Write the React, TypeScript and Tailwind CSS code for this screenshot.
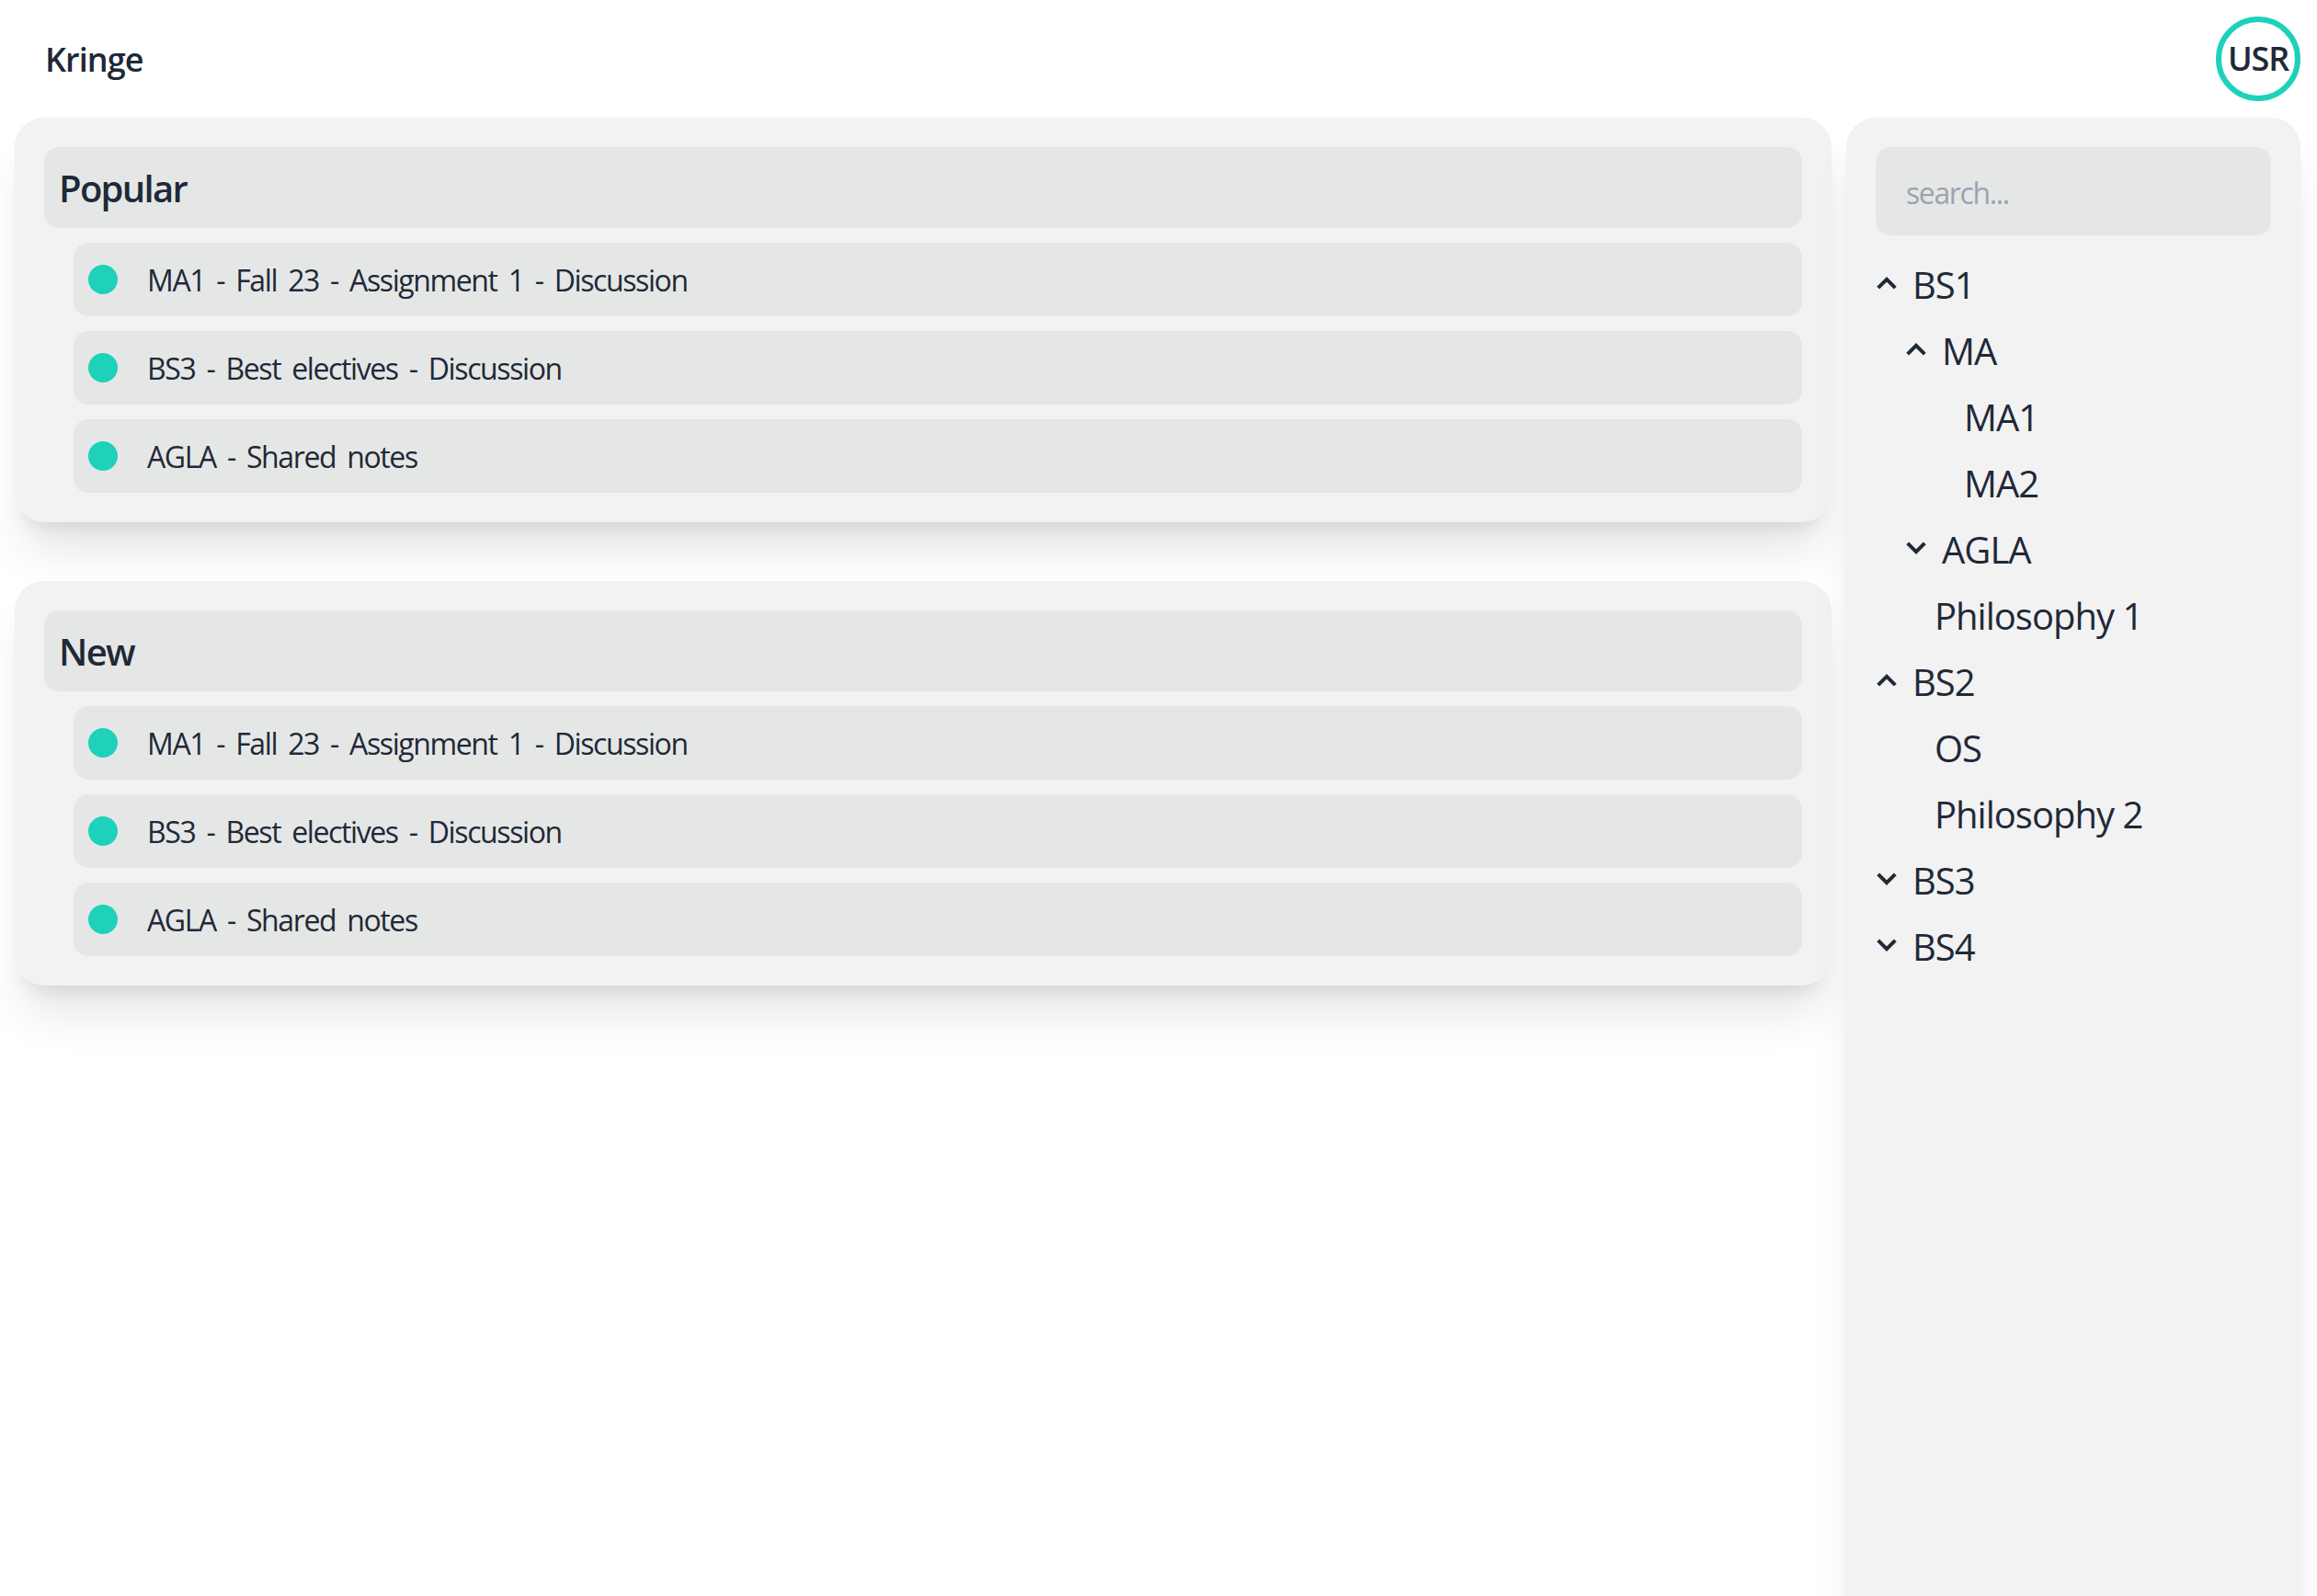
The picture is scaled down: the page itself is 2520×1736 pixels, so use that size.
const font = "font-['Open_Sans','Noto_Sans',sans-serif]";

const sections = [
  { title: 'Popular', items: ['MA1 - Fall 23 - Assignment 1 - Discussion', 'BS3 - Best electives - Discussion', 'AGLA - Shared notes'] },
  { title: 'New', items: ['MA1 - Fall 23 - Assignment 1 - Discussion', 'BS3 - Best electives - Discussion', 'AGLA - Shared notes'] },
];

type TreeRow = { label: string; open?: boolean; indent: string };

const tree: TreeRow[] = [
  { label: 'BS1', open: true, indent: 'pl-0' },
  { label: 'MA', open: true, indent: 'pl-8' },
  { label: 'MA1', indent: 'pl-24' },
  { label: 'MA2', indent: 'pl-24' },
  { label: 'AGLA', open: false, indent: 'pl-8' },
  { label: 'Philosophy 1', indent: 'pl-16' },
  { label: 'BS2', open: true, indent: 'pl-0' },
  { label: 'OS', indent: 'pl-16' },
  { label: 'Philosophy 2', indent: 'pl-16' },
  { label: 'BS3', open: false, indent: 'pl-0' },
  { label: 'BS4', open: false, indent: 'pl-0' },
];

function Chevron({ open }: { open: boolean }) {
  return (
    <svg className="w-6 h-6 shrink-0 text-[#1f2937]" viewBox="0 0 24 24" fill="none" stroke="currentColor" strokeWidth={4}>
      <path d={open ? 'M2.7 17.1L12 7.8l9.3 9.3' : 'M2.7 6.9l9.3 9.3 9.3-9.3'} />
    </svg>
  );
}

export default function App() {
  return (
    <div className={`${font} h-[1736px] overflow-hidden bg-white text-[#1f2937]`}>
      {/* Nav */}
      <div className="h-[128px] flex items-start justify-between pl-[49px] pr-[18px]">
        <span className="mt-[41px] text-[36px] leading-[48px] font-semibold tracking-[-0.9px]">Kringe</span>
        <div className="mt-[18px] w-[92px] h-[92px] rounded-full border-[6px] border-[#1dd1bb] flex items-center justify-center text-[36px] font-semibold tracking-[-1.2px]">
          USR
        </div>
      </div>

      <div className="flex gap-4 pl-4 pr-[18px]">
        {/* Main */}
        <div className="w-[1976px] flex flex-col gap-16">
          {sections.map((section) => (
            <div key={section.title} className="bg-[#f2f2f2] rounded-[32px] p-8 flex flex-col gap-4 shadow-[0_40px_50px_-10px_rgba(0,0,0,0.1),0_16px_20px_-12px_rgba(0,0,0,0.1)]">
              <div className="h-[88px] bg-[#e5e7e6] rounded-2xl flex items-center px-4 pt-[2px] text-[40px] font-semibold tracking-[-1.7px]">
                {section.title}
              </div>
              {section.items.map((item, i) => (
                <div key={i} className="ml-8 h-[80px] bg-[#e5e7e6] rounded-2xl flex items-center px-4 gap-8">
                  <span className="w-8 h-8 rounded-full bg-[#1dd1bb] shrink-0" />
                  <span className="text-[32px] tracking-[-1.4px] [word-spacing:5.2px] pt-[1px]">{item}</span>
                </div>
              ))}
            </div>
          ))}
        </div>

        {/* Sidebar */}
        <div className="w-[494px] h-[1640px] bg-[#f2f2f2] rounded-[32px] p-8 shadow-[0_40px_50px_-10px_rgba(0,0,0,0.1),0_16px_20px_-12px_rgba(0,0,0,0.1)]">
          <input
            placeholder="search..."
            className="w-full h-[96px] bg-[#e5e7e6] rounded-2xl pl-[33px] pr-8 pt-[3px] text-[32px] tracking-[-1.4px] placeholder:text-[#9ca3af] outline-none"
          />
          <div className="mt-4 flex flex-col">
            {tree.map((row, i) => (
              <div key={i} className={`${row.indent} h-[72px] flex items-center gap-4 text-[40px] tracking-[-1px]`}>
                {row.open !== undefined && <Chevron open={row.open} />}
                <span className="pt-[3px]">{row.label}</span>
              </div>
            ))}
          </div>
        </div>
      </div>
    </div>
  );
}
